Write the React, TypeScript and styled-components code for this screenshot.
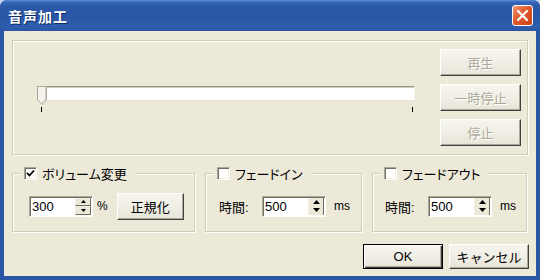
import React from "react";
import styled, { createGlobalStyle } from "styled-components";

const GlobalStyle = createGlobalStyle`
  html, body {
    margin: 0;
    padding: 0;
    background: #c9d5ea;
  }
  body {
    font-family: "Liberation Sans", "Noto Sans CJK JP", sans-serif;
    font-size: 12px;
    color: #000;
  }
`;

const Window = styled.div`
  width: 540px;
  height: 280px;
  box-sizing: border-box;
  display: flex;
  flex-direction: column;
  background: #2a56a6;
  border-radius: 7px 7px 0 0;
  overflow: hidden;
`;

const TitleBar = styled.div`
  height: 31px;
  flex: none;
  display: flex;
  align-items: center;
  justify-content: space-between;
  padding: 0 7px 0 8px;
  background: linear-gradient(
    to bottom,
    #5f8fd8 0,
    #3769bb 2px,
    #2b59a9 6px,
    #2a56a5 55%,
    #2d5eae 85%,
    #2a55a3 100%
  );
`;

const Title = styled.span`
  color: #fff;
  font-family: "Noto Sans CJK JP", sans-serif;
  font-weight: bold;
  font-size: 14px;
  letter-spacing: 1px;
  text-shadow: 1px 1px 0 #0c2a66;
`;

const CloseButton = styled.div`
  width: 21px;
  height: 21px;
  box-sizing: border-box;
  border: 1px solid #fff;
  border-radius: 3px;
  background: linear-gradient(135deg, #f19a74 0%, #e0592d 45%, #c9421a 100%);
  display: flex;
  align-items: center;
  justify-content: center;
`;

const Client = styled.div`
  flex: 1;
  margin: 0 4px 4px;
  background: #ece9d8;
  padding: 9px 8px 0;
  display: flex;
  flex-direction: column;
`;

const TopGroup = styled.div`
  height: 115px;
  box-sizing: border-box;
  border: 1px solid #d0ccb8;
  box-shadow: inset 1px 1px 0 #fff, 1px 1px 0 #fff;
  display: flex;
`;

const SliderArea = styled.div`
  flex: 1;
  padding: 45px 0 0 30px;
`;

const Slider = styled.div`
  position: relative;
  width: 372px;
`;

const Track = styled.div`
  height: 15px;
  box-sizing: border-box;
  background: #fff;
  border: 1px solid;
  border-color: #9a9786 #f7f6f0 #e6e3d4 #9a9786;
  box-shadow: inset 1px 1px 0 #cfccbc;
`;

const Thumb = styled.svg`
  position: absolute;
  left: -6px;
  top: 0;
`;

const Ticks = styled.div`
  display: flex;
  justify-content: space-between;
  margin: 6px 2px 0 -2px;
`;

const Tick = styled.div`
  width: 1px;
  height: 5px;
  background: #000;
`;

const ButtonColumn = styled.div`
  display: flex;
  flex-direction: column;
  gap: 8px;
  padding: 8px 6px 0 0;
`;

const Button = styled.div<{ $w: number; $h: number; $disabled?: boolean; $default?: boolean }>`
  width: ${({ $w }) => $w}px;
  height: ${({ $h }) => $h}px;
  box-sizing: border-box;
  display: flex;
  align-items: center;
  justify-content: center;
  font-family: "Liberation Sans", "Noto Sans CJK JP", sans-serif;
  font-size: 13px;
  background: linear-gradient(to bottom, #f6f5ee 0%, #efede3 60%, #e6e3d6 100%);
  color: ${({ $disabled }) => ($disabled ? "#aca899" : "#000")};
  text-shadow: ${({ $disabled }) => ($disabled ? "1px 1px 0 #fff" : "none")};
  ${({ $default }) =>
    $default
      ? `border: 1px solid #000;
         box-shadow: inset 1px 1px 0 #fff, inset -1px -1px 0 #404040, inset -2px -2px 0 #aca899;`
      : `border: 1px solid;
         border-color: #fff #404040 #404040 #fff;
         box-shadow: inset -1px -1px 0 #aca899;`}
`;

const BottomRow = styled.div`
  display: flex;
  gap: 10px;
  margin-top: 10px;
`;

const Group = styled.fieldset<{ $w: number }>`
  width: ${({ $w }) => $w}px;
  box-sizing: border-box;
  margin: 0;
  padding: 0;
  min-width: 0;
  border: 1px solid #d0ccb8;
  box-shadow: inset 1px 1px 0 #fff, 1px 1px 0 #fff;
`;

const Legend = styled.legend`
  margin-left: 8px;
  padding: 0 8px 0 3px;
  height: 16px;
  display: flex;
  align-items: center;
  gap: 5px;
  background: #ece9d8;
  font-size: 13px;
  font-feature-settings: "palt";
  white-space: nowrap;
`;

const CheckBox = styled.span`
  width: 13px;
  height: 13px;
  box-sizing: border-box;
  flex: none;
  background: #fff;
  border: 1px solid;
  border-color: #aca899 #fff #fff #aca899;
  box-shadow: inset 1px 1px 0 #716f64, inset -1px -1px 0 #f1efe2;
  display: flex;
  align-items: center;
  justify-content: center;
`;

const GroupBody = styled.div<{ $pad: number }>`
  height: 50px;
  display: flex;
  align-items: center;
  padding-left: ${({ $pad }) => $pad}px;
`;

const FieldLabel = styled.span`
  width: 43px;
  font-size: 13px;
`;

const Unit = styled.span<{ $ml: number; $mr?: number }>`
  margin-left: ${({ $ml }) => $ml}px;
  margin-right: ${({ $mr }) => $mr || 0}px;
  font-size: 12px;
`;

const SpinBox = styled.div`
  width: 64px;
  height: 21px;
  box-sizing: border-box;
  display: flex;
  background: #fff;
  border: 1px solid;
  border-color: #aca899 #fff #fff #aca899;
  box-shadow: inset 1px 1px 0 #716f64;
  padding: 1px;
`;

const SpinText = styled.span`
  flex: 1;
  font-size: 13px;
  line-height: 17px;
  padding-left: 1px;
`;

const SpinButtons = styled.div`
  width: 16px;
  display: flex;
  flex-direction: column;
`;

const SpinArrow = styled.div<{ $large?: boolean }>`
  flex: 1;
  display: flex;
  align-items: center;
  justify-content: center;
  background: #ece9d8;
  box-sizing: border-box;
  border: 1px solid;
  border-color: #f1efe2 #716f64 #716f64 #f1efe2;
  ${({ $large }) => ($large ? "border-width: 0 1px 0 1px;" : "")}
`;

const Footer = styled.div`
  display: flex;
  justify-content: flex-end;
  gap: 6px;
  margin: 12px -1px 0 0;
`;

const Arrow = ({ up, large }: { up: boolean; large?: boolean }) => {
  const w = large ? 7 : 5;
  const h = large ? 4 : 3;
  const pts = up ? `0,${h} ${w / 2},0 ${w},${h}` : `0,0 ${w / 2},${h} ${w},0`;
  return (
    <svg width={w} height={h} viewBox={`0 0 ${w} ${h}`}>
      <polygon points={pts} fill="#000" />
    </svg>
  );
};

const Spinner = ({ value, large }: { value: string; large?: boolean }) => (
  <SpinBox>
    <SpinText>{value}</SpinText>
    <SpinButtons>
      <SpinArrow $large={large}>
        <Arrow up large={large} />
      </SpinArrow>
      <SpinArrow $large={large}>
        <Arrow up={false} large={large} />
      </SpinArrow>
    </SpinButtons>
  </SpinBox>
);

const Check = ({ checked }: { checked?: boolean }) => (
  <CheckBox>
    {checked ? (
      <svg width="9" height="9" viewBox="0 0 9 9">
        <path d="M1 4 L3.5 6.5 L8 1.5" stroke="#000" strokeWidth="1.8" fill="none" />
      </svg>
    ) : null}
  </CheckBox>
);

export default function App() {
  return (
    <>
      <GlobalStyle />
      <Window>
        <TitleBar>
          <Title>音声加工</Title>
          <CloseButton>
            <svg width="13" height="13" viewBox="0 0 13 13">
              <path d="M2 2 L11 11 M11 2 L2 11" stroke="#fff" strokeWidth="2.2" strokeLinecap="round" />
            </svg>
          </CloseButton>
        </TitleBar>
        <Client>
          <TopGroup>
            <SliderArea>
              <Slider>
                <Track />
                <Thumb width="10" height="19" viewBox="0 0 10 19">
                  <path d="M0.5 0.5 H9.5 V13.5 L5 18.5 L0.5 13.5 Z" fill="#f4f3ee" stroke="#a9a797" />
                  <path d="M8.5 1.5 V13 L5 17" stroke="#d6d3c6" fill="none" />
                </Thumb>
                <Ticks>
                  <Tick />
                  <Tick />
                </Ticks>
              </Slider>
            </SliderArea>
            <ButtonColumn>
              <Button $w={81} $h={27} $disabled>
                再生
              </Button>
              <Button $w={81} $h={27} $disabled>
                一時停止
              </Button>
              <Button $w={81} $h={27} $disabled>
                停止
              </Button>
            </ButtonColumn>
          </TopGroup>

          <BottomRow>
            <Group $w={183}>
              <Legend>
                <Check checked />
                ボリューム変更
              </Legend>
              <GroupBody $pad={16}>
                <Spinner value="300" />
                <Unit $ml={4} $mr={9}>
                  %
                </Unit>
                <Button $w={67} $h={27}>
                  正規化
                </Button>
              </GroupBody>
            </Group>
            <Group $w={157}>
              <Legend>
                <Check />
                フェードイン
              </Legend>
              <GroupBody $pad={13}>
                <FieldLabel>時間:</FieldLabel>
                <Spinner value="500" large />
                <Unit $ml={8}>ms</Unit>
              </GroupBody>
            </Group>
            <Group $w={155}>
              <Legend>
                <Check />
                フェードアウト
              </Legend>
              <GroupBody $pad={12}>
                <FieldLabel>時間:</FieldLabel>
                <Spinner value="500" large />
                <Unit $ml={8}>ms</Unit>
              </GroupBody>
            </Group>
          </BottomRow>

          <Footer>
            <Button $w={80} $h={25} $default>
              OK
            </Button>
            <Button $w={80} $h={25}>
              キャンセル
            </Button>
          </Footer>
        </Client>
      </Window>
    </>
  );
}
